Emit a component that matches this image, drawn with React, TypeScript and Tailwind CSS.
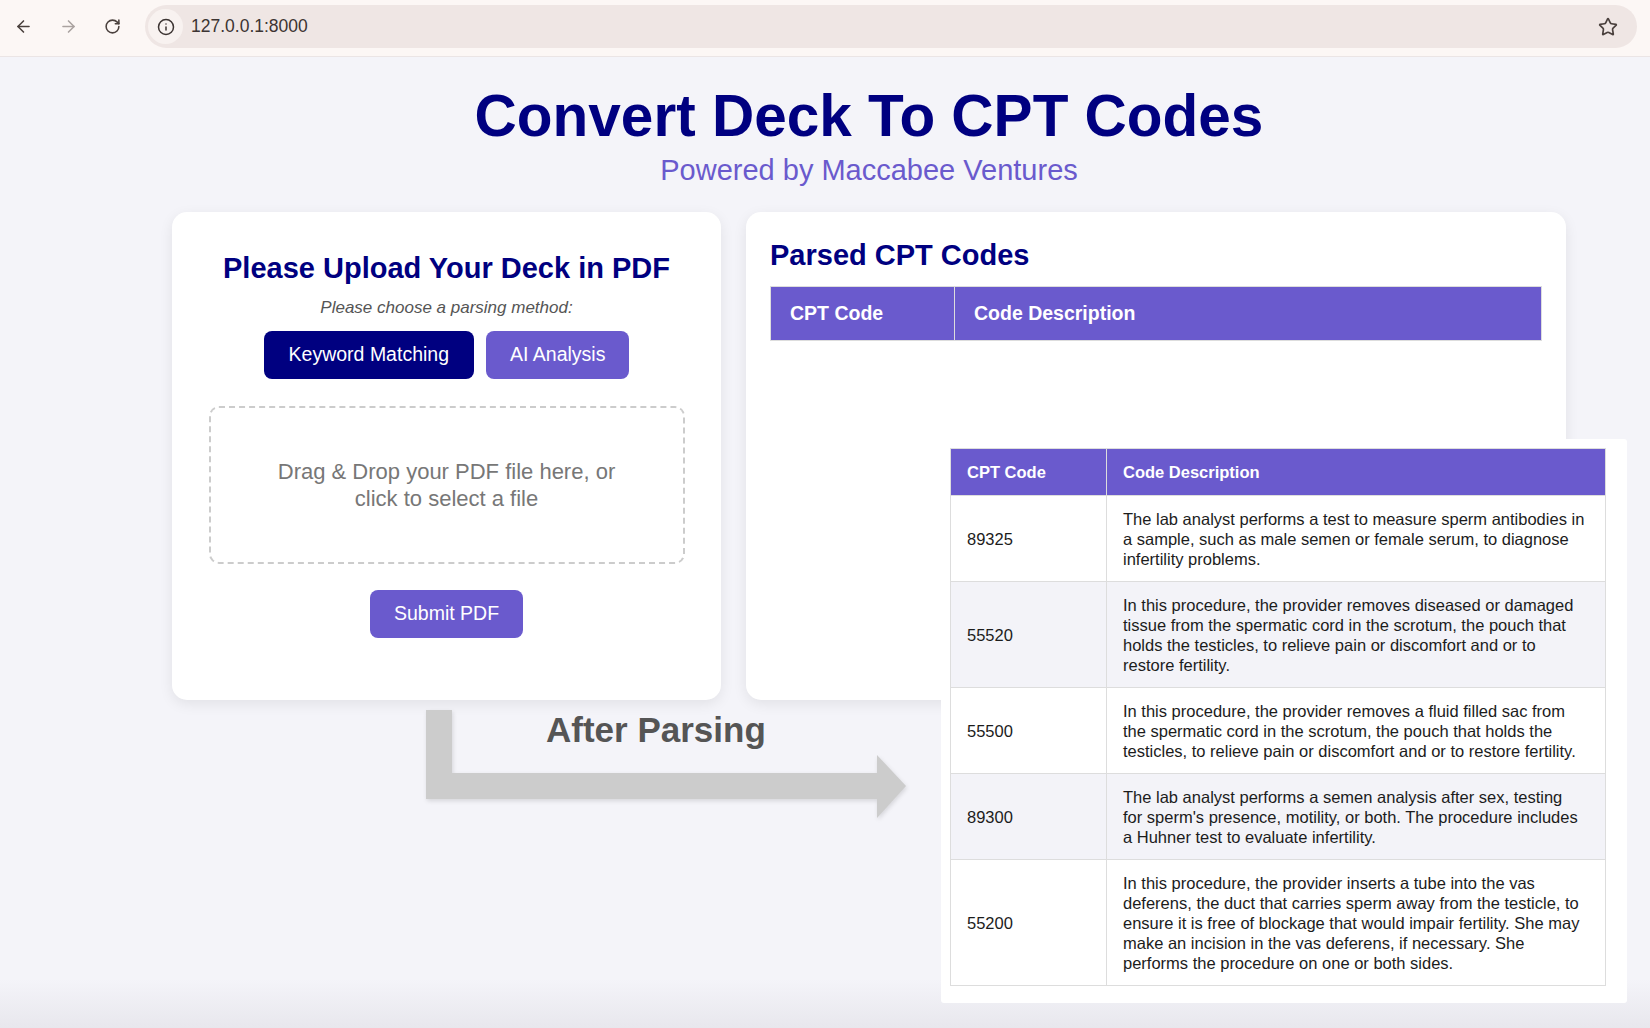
import { ArrowLeft, ArrowRight, RotateCw, Info, Star } from "lucide-react";

const rows = [
  {
    code: "89325",
    lines: [
      "The lab analyst performs a test to measure sperm antibodies in",
      "a sample, such as male semen or female serum, to diagnose",
      "infertility problems.",
    ],
  },
  {
    code: "55520",
    lines: [
      "In this procedure, the provider removes diseased or damaged",
      "tissue from the spermatic cord in the scrotum, the pouch that",
      "holds the testicles, to relieve pain or discomfort and or to",
      "restore fertility.",
    ],
  },
  {
    code: "55500",
    lines: [
      "In this procedure, the provider removes a fluid filled sac from",
      "the spermatic cord in the scrotum, the pouch that holds the",
      "testicles, to relieve pain or discomfort and or to restore fertility.",
    ],
  },
  {
    code: "89300",
    lines: [
      "The lab analyst performs a semen analysis after sex, testing",
      "for sperm's presence, motility, or both. The procedure includes",
      "a Huhner test to evaluate infertility.",
    ],
  },
  {
    code: "55200",
    lines: [
      "In this procedure, the provider inserts a tube into the vas",
      "deferens, the duct that carries sperm away from the testicle, to",
      "ensure it is free of blockage that would impair fertility. She may",
      "make an incision in the vas deferens, if necessary. She",
      "performs the procedure on one or both sides.",
    ],
  },
];

function BrowserBar() {
  return (
    <div className="flex h-[57px] items-start border-b border-[#ebe5e5] bg-[#fcf7f5] pt-[5px]">
      <div className="flex h-[43px] items-center gap-[26px] pl-[14px] pr-[24px]">
        <ArrowLeft size={19} strokeWidth={2} className="text-[#4a403d]" />
        <ArrowRight size={19} strokeWidth={2} className="text-[#aaa2a0]" />
        <RotateCw size={17} strokeWidth={2.2} className="text-[#4a403d]" />
      </div>
      <div className="mr-[13px] flex h-[43px] flex-1 items-center rounded-full bg-[#efe6e4]">
        <div className="ml-[3px] flex h-[35px] w-[35px] items-center justify-center rounded-full bg-[#f8f2f0]">
          <Info size={18} strokeWidth={2} className="text-[#3c3432]" />
        </div>
        <span className="ml-[8px] text-[17.5px] text-[#3c3432]">127.0.0.1:8000</span>
        <Star size={20} strokeWidth={2} className="ml-auto mr-[19px] text-[#4a403d]" />
      </div>
    </div>
  );
}

function UploadCard() {
  return (
    <section className="flex h-[488px] w-[549px] flex-col items-center rounded-[15px] bg-white pt-[40px] shadow-[0_4px_14px_rgba(0,0,0,0.08)]">
      <h2 className="text-[29px] font-bold leading-[33px] text-[#000080]">Please Upload Your Deck in PDF</h2>
      <p className="mt-[13px] text-[17px] italic leading-[20px] text-[#555]">Please choose a parsing method:</p>
      <div className="mt-[13px] flex gap-[12px]">
        <button className="h-[48px] rounded-[8px] bg-[#000080] px-[25px] text-[19.5px] text-white">Keyword Matching</button>
        <button className="h-[48px] rounded-[8px] bg-[#6a5acd] px-[24px] text-[19.5px] text-white">AI Analysis</button>
      </div>
      <div className="mt-[27px] flex h-[158px] w-[476px] items-center justify-center rounded-[10px] border-2 border-dashed border-[#cccccc] text-center text-[22px] leading-[27px] text-[#777]">
        <p>
          Drag &amp; Drop your PDF file here, or
          <br />
          click to select a file
        </p>
      </div>
      <button className="mt-[26px] h-[48px] rounded-[8px] bg-[#6a5acd] px-[24px] text-[19.5px] text-white">Submit PDF</button>
    </section>
  );
}

function ParsedCard() {
  return (
    <section className="h-[488px] w-[820px] rounded-[15px] bg-white px-[24px] pt-[27px] shadow-[0_4px_14px_rgba(0,0,0,0.08)]">
      <h2 className="text-[29px] font-bold leading-[33px] text-[#000080]">Parsed CPT Codes</h2>
      <table className="mt-[14px] w-full border-collapse">
        <thead>
          <tr className="bg-[#6a5acd]">
            <th className="h-[54px] w-[184px] border border-[#dddddd] px-[19px] text-left text-[19.5px] font-bold text-white">CPT Code</th>
            <th className="h-[54px] border border-[#dddddd] px-[19px] text-left text-[19.5px] font-bold text-white">Code Description</th>
          </tr>
        </thead>
      </table>
    </section>
  );
}

function ResultSnapshot() {
  return (
    <div className="absolute left-[941px] top-[382px] h-[564px] w-[686px] rounded-[3px] bg-white pl-[9px] pt-[9px]">
      <table className="w-[656px] border-collapse">
        <thead>
          <tr className="bg-[#6a5acd]">
            <th className="w-[156px] border border-[#dddddd] px-[16px] py-[13px] text-left text-[16.5px] font-bold leading-[20px] text-white">CPT Code</th>
            <th className="border border-[#dddddd] px-[16px] py-[13px] text-left text-[16.5px] font-bold leading-[20px] text-white">Code Description</th>
          </tr>
        </thead>
        <tbody>
          {rows.map((r, i) => (
            <tr key={r.code} className={i % 2 === 1 ? "bg-[#f3f3f8]" : "bg-white"}>
              <td className="border border-[#dddddd] px-[16px] py-[12.5px] align-middle text-[16.5px] leading-[20px] text-[#1c1c1c]">{r.code}</td>
              <td className="border border-[#dddddd] px-[16px] py-[12.5px] text-[16.5px] leading-[20px] text-[#1c1c1c]">
                {r.lines.map((l) => (
                  <span key={l} className="block whitespace-nowrap">{l}</span>
                ))}
              </td>
            </tr>
          ))}
        </tbody>
      </table>
    </div>
  );
}

function AfterParsing() {
  return (
    <>
      <svg
        className="absolute left-[420px] top-[648px] drop-shadow-[1px_2px_2px_rgba(0,0,0,0.12)]"
        width="492"
        height="120"
        viewBox="0 0 492 120"
      >
        <polygon points="6,5 32,5 32,68 457,68 457,50 486,81 457,113 457,94 6,94" fill="#cccccc" />
      </svg>
      <div className="absolute left-[546px] top-[653px] text-[35px] font-bold leading-[40px] text-[#555]">After Parsing</div>
    </>
  );
}

export default function App() {
  return (
    <div className="h-[1028px] w-full overflow-hidden bg-[#f4f4f9] font-['Liberation_Sans',Arial,sans-serif]">
      <BrowserBar />
      <main className="relative h-[971px] bg-[linear-gradient(to_bottom,#f4f4f9_0%,#f4f4f9_95%,#e8e7ed_100%)] pt-[26px]">
        <div className="ml-[172px] w-[1394px]">
          <h1 className="text-center text-[58.5px] font-bold leading-[66px] text-[#000080]">Convert Deck To CPT Codes</h1>
          <p className="mt-[5px] text-center text-[29px] leading-[33px] text-[#6a5acd]">Powered by Maccabee Ventures</p>
          <div className="mt-[25px] flex gap-[25px]">
            <UploadCard />
            <ParsedCard />
          </div>
        </div>
        <AfterParsing />
        <ResultSnapshot />
      </main>
    </div>
  );
}
